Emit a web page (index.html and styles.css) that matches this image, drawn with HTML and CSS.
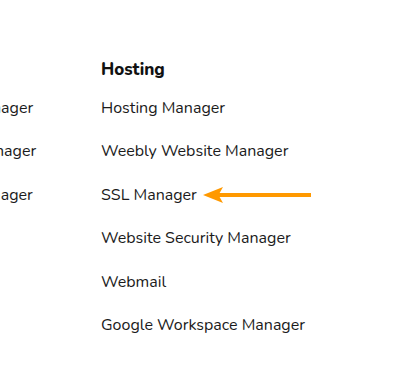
FILE: index.html
```html
<!DOCTYPE html>
<html lang="en">

<head>
    <meta charset="UTF-8">
    <meta name="viewport" content="width=device-width, initial-scale=1.0">
    <title>Products</title>
    <link rel="stylesheet" href="styles.css">
</head>

<body>
    <div class="menu">
        <div class="col col-domains">
            <h3 class="col-title">Domains</h3>
            <ul class="links">
                <li>Domain Manager</li>
                <li>Transfer Manager</li>
                <li>Contact Manager</li>
            </ul>
        </div>

        <div class="col">
            <h3 class="col-title">Hosting</h3>
            <ul class="links">
                <li>Hosting Manager</li>
                <li>Weebly Website Manager</li>
                <li class="marked">SSL Manager
                    <svg class="arrow" width="108" height="16" viewBox="0 0 108 16">
                        <path d="M0 8 L20 0 L15.5 8 L20 16 Z" fill="#ff9900"/>
                        <rect x="14" y="6" width="94" height="4" fill="#ff9900"/>
                    </svg>
                </li>
                <li>Website Security Manager</li>
                <li>Webmail</li>
                <li>Google Workspace Manager</li>
            </ul>
        </div>
    </div>
</body>

</html>
```

FILE: styles.css
```css
* {
    margin: 0;
    padding: 0;
}

body {
    background: #fff;
    color: #1b1b1b;
    font-family: "Nunito", Lato, "Noto Sans", sans-serif;
    overflow: hidden;
}

.menu {
    display: flex;
    gap: 60px;
    padding-top: 59px;
    margin-left: -90px;
}

.col-domains {
    width: 131px;
}

.col-title {
    font-size: 17px;
    font-weight: 800;
    line-height: 22px;
    color: #111;
}

.links {
    list-style: none;
    margin-top: 17px;
}

.links li {
    font-size: 16px;
    line-height: 20px;
    height: 20px;
    margin-bottom: 23.4px;
    white-space: nowrap;
    display: flex;
    align-items: center;
}

.arrow {
    margin-left: 6px;
    margin-top: 1px;
}
```
